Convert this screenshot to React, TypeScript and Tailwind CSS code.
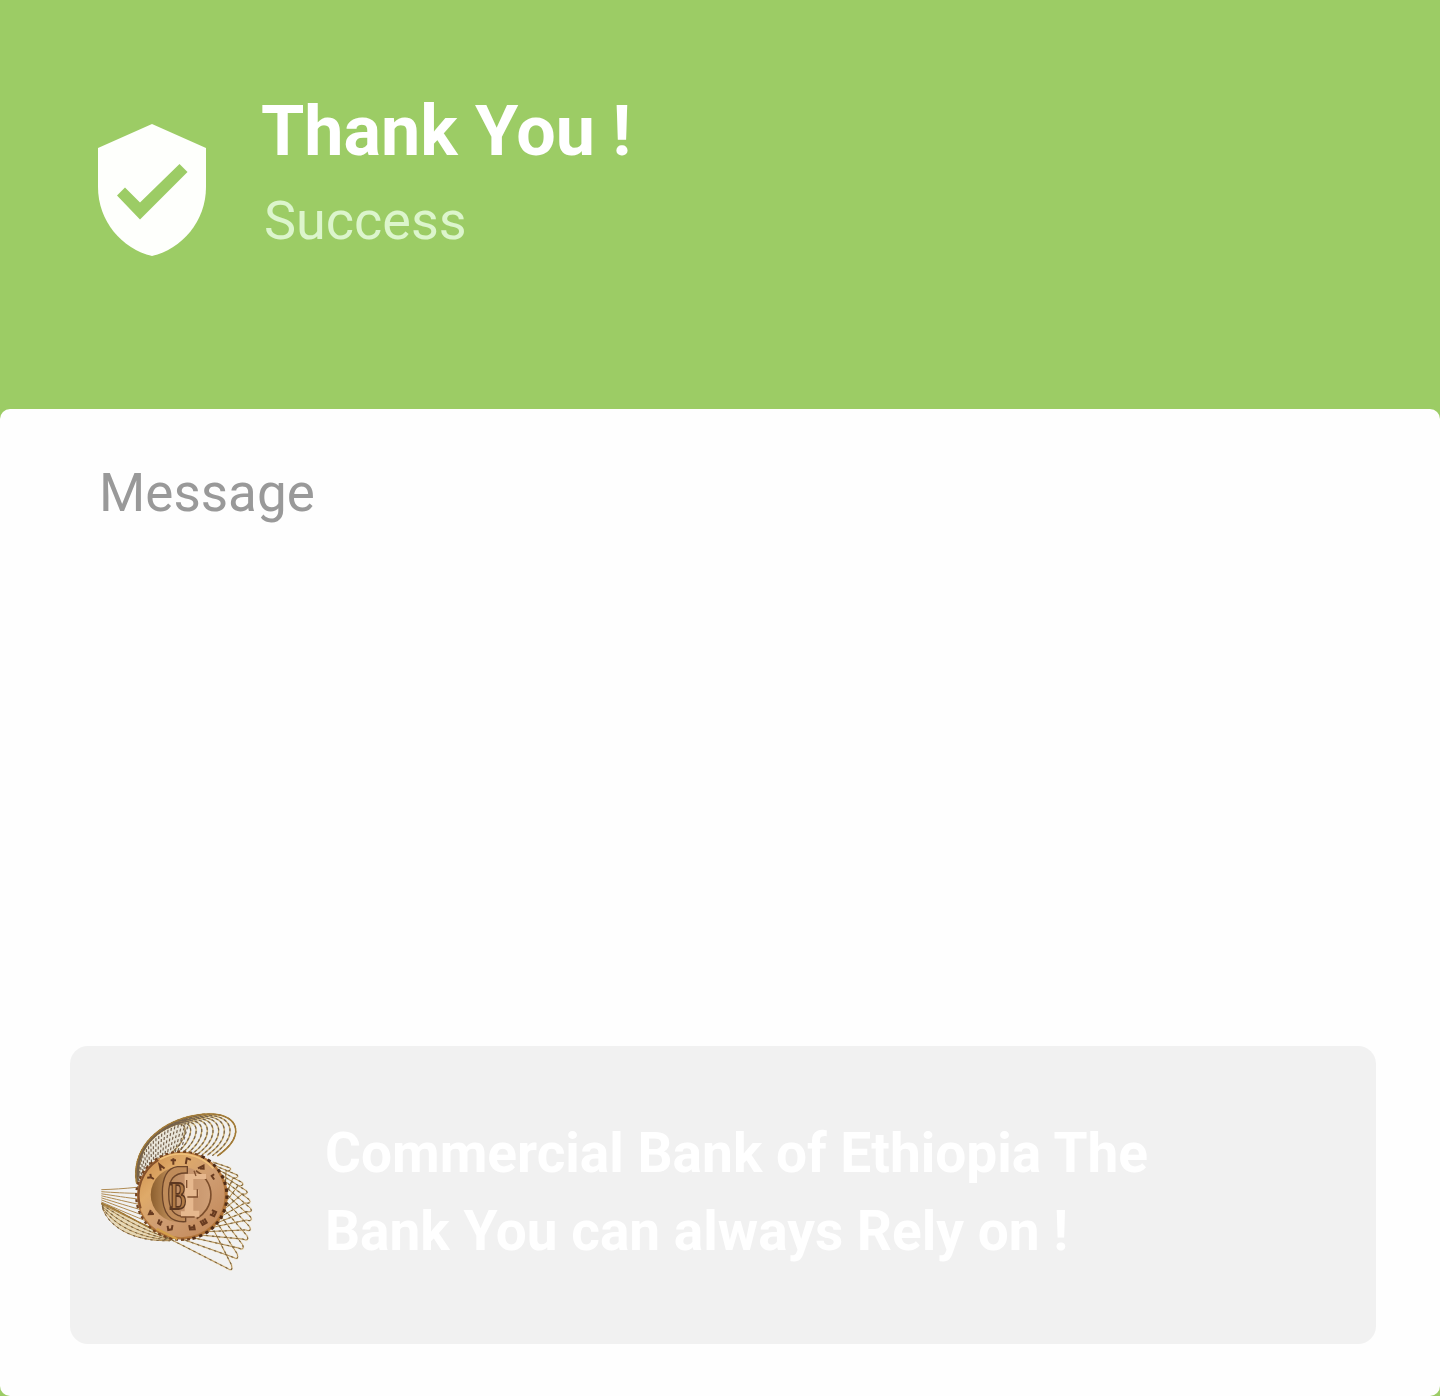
const lerpPath = (a: number[], b: number[], t: number) => {
  const p = a.map((v, i) => (v + (b[i] - v) * t).toFixed(1));
  let d = `M${p[0]} ${p[1]}`;
  for (let i = 2; i < p.length; i += 6) d += `C${p.slice(i, i + 6).join(" ")}`;
  return d;
};

const fan = (a: number[], b: number[], n: number) =>
  Array.from({ length: n }, (_, i) => lerpPath(a, b, i / (n - 1)));

const bezier = (a: number, b: number, c: number, d: number, t: number) =>
  (1 - t) ** 3 * a + 3 * (1 - t) ** 2 * t * b + 3 * (1 - t) * t * t * c + t ** 3 * d;

const crest = fan(
  [140, 250, 118, 120, 250, 40, 365, 42, 450, 46, 465, 110, 382, 168],
  [146, 225, 145, 140, 200, 92, 262, 72, 300, 66, 290, 120, 245, 158],
  10,
);

/* Short strands between the crest's outer edge and the top of the coin. */
const crestHatch = Array.from({ length: 24 }, (_, i) => {
  const t = 0.06 + i * 0.033;
  const x = bezier(140, 118, 250, 365, t);
  const y = bezier(250, 120, 40, 42, t);
  const a = Math.PI + 0.15 + i * 0.06;
  return `M${x.toFixed(1)} ${y.toFixed(1)}L${(277 + 134 * Math.cos(a)).toFixed(1)} ${(287 + 132 * Math.sin(a)).toFixed(1)}`;
});

const leftRays = fan(
  [34, 269, 70, 268, 100, 266, 140, 262],
  [34, 312, 80, 335, 130, 360, 200, 390],
  8,
);
const leftRim = fan(
  [34, 310, 80, 325, 150, 375, 250, 416],
  [38, 325, 55, 375, 120, 425, 240, 422],
  5,
);

/* Each wire loop leaves the coin, turns round its tip and comes back. */
const loops = [
  [230, 412, 428, 514, 372, 392],
  [270, 415, 446, 479, 384, 372],
  [305, 412, 463, 450, 392, 348],
  [330, 405, 477, 422, 400, 325],
  [350, 395, 485, 393, 404, 300],
  [368, 382, 488, 362, 406, 280],
  [382, 368, 488, 335, 404, 258],
  [392, 350, 484, 308, 400, 240],
  [400, 330, 475, 280, 394, 224],
  [406, 308, 462, 254, 386, 210],
  [408, 285, 446, 230, 378, 198],
  [406, 262, 424, 208, 368, 186],
].map(([ax, ay, tx, ty, bx, by]) => {
  const mx = tx - (tx - 277) * 0.05;
  const my = ty - (ty - 287) * 0.05;
  return `M${ax} ${ay}L${mx - 9} ${my + 2}Q${tx + 2} ${ty + 4} ${mx + 4} ${my - 8}L${bx} ${by}`;
});

const marks = [
  { x: 183, y: 232, r: -60, d: "M-7 -9L0 0L8 -7M0 0V10" },
  { x: 213, y: 201, r: -30, d: "M-6 9L0 -9L7 9M-3 0H4" },
  { x: 250, y: 184, r: 0, d: "M0 -9V10M-8 -3H8" },
  { x: 294, y: 183, r: 10, d: "M-5 -10V10M-5 -8L8 -5" },
  { x: 334, y: 202, r: 30, d: "M-7 8L3 -8L8 0L-2 5" },
  { x: 368, y: 232, r: 55, d: "M-8 0H8M-5 -9V3" },
  { x: 370, y: 340, r: 115, d: "M-7 8V-6H7V8M-7 1H7" },
  { x: 341, y: 366, r: 150, d: "M-7 8V-6H7V8M0 -6V8" },
  { x: 306, y: 382, r: 170, d: "M-7 7V-7L7 -5V8M-5 0H5" },
  { x: 240, y: 383, r: 190, d: "M-6 9V-4L4 -8L8 4" },
  { x: 209, y: 368, r: 215, d: "M-8 -4H3L6 8M-3 -4V8" },
  { x: 183, y: 339, r: 240, d: "M-7 6L0 -7L8 4M0 -7V6" },
];

function CoinLogo() {
  return (
    <svg viewBox="0 0 525 540" className="h-[180px] w-[175px] shrink-0 blur-[0.4px]" fill="none" aria-label="Commercial Bank of Ethiopia">
      <defs>
        <linearGradient id="coin" x1="0" y1="0" x2="1" y2="1">
          <stop offset="0" stopColor="#c98a48" />
          <stop offset=".3" stopColor="#dfaa69" />
          <stop offset=".55" stopColor="#cf9d72" />
          <stop offset="1" stopColor="#c08555" />
        </linearGradient>
        <linearGradient id="inner" x1="0" y1="0" x2="1" y2="0">
          <stop offset="0" stopColor="#8c5f2e" />
          <stop offset=".3" stopColor="#b98955" />
          <stop offset=".5" stopColor="#c39068" />
          <stop offset="1" stopColor="#d0a077" />
        </linearGradient>
      </defs>
      <path d="M140 250C118 120 250 40 365 42L290 90L262 158L160 215Z" fill="#e0d6bc" opacity=".45" />
      <path d="M34 310C80 325 150 375 250 412L240 424C120 425 55 375 34 310Z" fill="#dfc88f" opacity=".6" />
      <g stroke="#ecdfba" strokeWidth="7" opacity=".5">
        {[...crest, ...loops].map((d, i) => <path key={i} d={d} />)}
      </g>
      <g stroke="#af8a52" strokeWidth="3">
        {[...leftRays, ...leftRim, ...loops].map((d, i) => <path key={i} d={d} />)}
      </g>
      <g stroke="#c0a060" strokeWidth="3.4">
        {crest.map((d, i) => <path key={i} d={d} />)}
      </g>
      <g stroke="#75624c" strokeWidth="3.6" strokeDasharray="9 7">
        {[...crest, ...crestHatch].map((d, i) => <path key={i} d={d} />)}
      </g>
      <g stroke="#7b6440" strokeWidth="3.2" strokeDasharray="7 11">
        {[...loops, ...leftRim].map((d, i) => <path key={i} d={d} />)}
      </g>
      <g stroke="#a27a36" strokeWidth="4">
        <path d={crest[0]} />
        <path d={leftRim[0]} />
      </g>
      <ellipse cx="277" cy="287" rx="136" ry="132" fill="#b3763b" />
      <path d="M335 169A136 132 0 0 1 300 417" stroke="#4f2b15" strokeWidth="9" strokeDasharray="10 11" />
      <path d="M300 417A136 132 0 1 1 335 169" stroke="#744420" strokeWidth="7" strokeDasharray="9 9" />
      <ellipse cx="274" cy="285" rx="130" ry="127" fill="url(#coin)" />
      <path d="M152 325A130 127 0 0 1 205 180" stroke="#85502a" strokeWidth="6" />
      <path d="M210 178A130 127 0 0 1 370 205" stroke="#f0c27a" strokeWidth="5" />
      <path d="M200 386L262 418" stroke="#d4a04a" strokeWidth="7" />
      <ellipse cx="272" cy="284" rx="90" ry="84" fill="url(#inner)" />
      <path d="M318 212A90 84 0 0 1 320 356" stroke="#7c4e2c" strokeWidth="5" />
      <path d="M292 200H262C228 205 217 236 217 280C217 340 240 368 287 365V350C252 350 236 330 236 281C236 240 250 217 292 219Z" fill="#c08c5a" stroke="#6d4529" strokeWidth="4" />
      <path d="M284 222H348V237H310V270H326V289H310V332H328V350H273V334H284Z" fill="#e6b88e" />
      <path d="M272 351H314M290 240V264M292 291H322V268M312 212L318 228" stroke="#80502f" strokeWidth="4" />
      <text x="239" y="326" fontFamily="Liberation Serif" fontWeight="bold" fontSize="118" textLength="49" lengthAdjust="spacingAndGlyphs" fill="#b07a45" stroke="#5b3720" strokeWidth="5.500">B</text>
      <g stroke="#683b20" strokeWidth="6">
        {marks.map((m, i) => <path key={i} d={m.d} transform={`translate(${m.x} ${m.y}) rotate(${m.r})`} />)}
      </g>
    </svg>
  );
}

function ShieldCheck() {
  return (
    <svg viewBox="0 0 110 134" className="mt-[123px] h-[134px] w-[110px] shrink-0">
      <path d="M55 1L109 25V64C109 98 85 126 55 133C25 126 1 98 1 64V25Z" fill="#fefffc" />
      <path d="M20 72.5L28 64.5L43 79.5L82.500 41L90.500 49L43 96.500Z" fill="#9ccc65" />
    </svg>
  );
}

export default function App() {
  return (
    <main className="flex h-[1396px] w-[1440px] flex-col overflow-hidden bg-[#9ccc65] font-['Roboto',sans-serif]">
      <header className="flex h-[409px] shrink-0 pl-[97px]">
        <ShieldCheck />
        <div className="ml-[54px] pt-[90px]">
          <h1 className="text-[70px] leading-[82px] font-bold whitespace-nowrap text-white">Thank You !</h1>
          <p className="mt-[17px] pl-[3px] text-[54px] leading-[64px] text-[#dcf5cc]">Success</p>
        </div>
      </header>
      <section className="flex flex-1 flex-col justify-between rounded-[10px] bg-[#fefefe] pt-[52px] pr-[64px] pb-[52px] pl-[70px]">
        <p className="pl-[29px] text-[53px] leading-[64px] text-[#999999]">Message</p>
        <div className="flex h-[298px] rounded-[18px] bg-[#f1f1f1] pt-[54px] pl-[20px]">
          <CoinLogo />
          <p className="ml-[60px] pt-[14px] text-[55px] leading-[78px] font-bold whitespace-nowrap text-white">
            Commercial Bank of Ethiopia The
            <br />
            Bank You can always Rely on !
          </p>
        </div>
      </section>
    </main>
  );
}
